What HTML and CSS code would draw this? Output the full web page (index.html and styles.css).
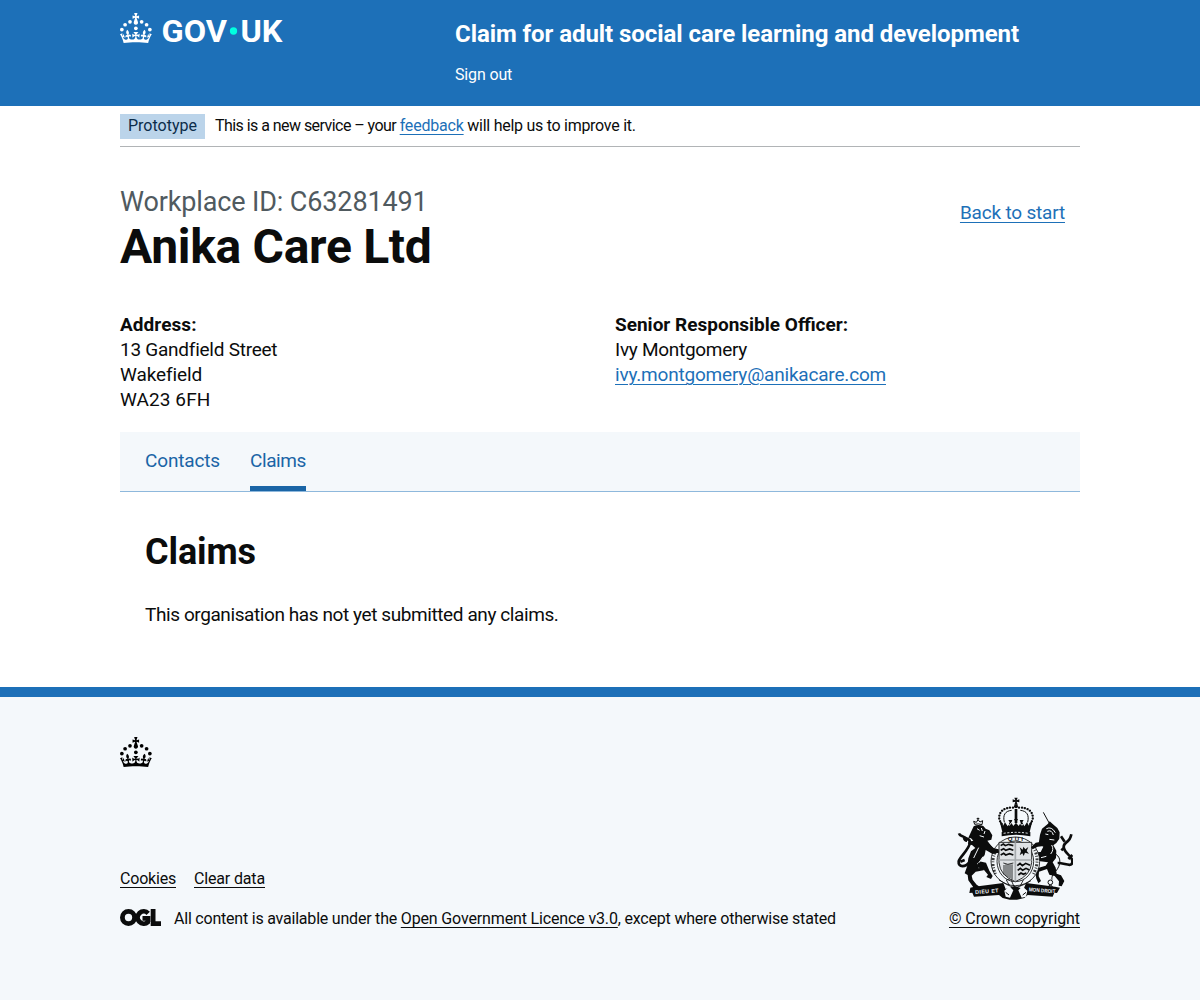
FILE: index.html
```html
<!DOCTYPE html>
<html lang="en">
<head>
<meta charset="utf-8">
<title>Anika Care Ltd – Claims</title>
<link rel="stylesheet" href="styles.css">
</head>
<body>
<svg class="symbols" width="0" height="0" aria-hidden="true">
  <symbol id="crown" viewBox="0 0 64 60">
    <circle cx="20" cy="17.6" r="3.7"/><circle cx="10.2" cy="23.5" r="3.7"/><circle cx="3.7" cy="33.2" r="3.7"/><circle cx="31.7" cy="30.6" r="3.7"/><circle cx="43.3" cy="17.6" r="3.7"/><circle cx="53.2" cy="23.5" r="3.7"/><circle cx="59.7" cy="33.2" r="3.7"/>
    <path d="M33.1,9.8c.2-.1.3-.3.5-.5l4.6,2.4v-6.8l-4.6,1.5c-.1-.2-.3-.3-.5-.5l1.9-5.9h-6.7l1.9,5.9c-.2.1-.3.3-.5.5l-4.6-1.5v6.8l4.6-2.4c.1.2.3.3.5.5l-2.6,8c-.9,2.8,1.2,5.7,4.1,5.7h0c3,0,5.1-2.9,4.1-5.7l-2.6-8ZM37,37.9s-3.4,3.8-4.1,6.1c2.2,0,4.2-.5,6.4-2.8l-.7,8.5c-2-2.8-4.4-4.1-5.7-3.8.1,3.1.5,6.7,5.8,7.2,3.7.3,6.7-1.5,7-3.8.4-2.6-2-4.3-3.7-1.6-1.4-4.5,2.4-6.1,4.9-3.2-1.9-4.5-1.8-7.7,2.4-10.9,3,4,2.6,7.3-1.2,11.1,2.4-1.3,6.2,0,4,4.6-1.2-2.8-3.7-2.2-4.2.2-.3,1.7.7,3.7,3,4.2,1.9.3,4.7-.9,7-5.9-1.3,0-2.4.7-3.9,1.7l2.4-8c.6,2.3,1.4,3.7,2.2,4.5.6-1.6.5-2.8,0-5.3l5,1.8c-2.6,3.6-5.2,8.7-7.3,17.5-7.4-1.1-15.7-1.7-24.5-1.7h0c-8.8,0-17.1.6-24.5,1.7-2.1-8.9-4.7-13.9-7.3-17.5l5-1.8c-.5,2.5-.6,3.7,0,5.3.8-.8,1.6-2.3,2.2-4.5l2.4,8c-1.5-1-2.6-1.7-3.9-1.7,2.3,5,5.2,6.2,7,5.9,2.3-.4,3.3-2.4,3-4.2-.5-2.4-3-3.1-4.2-.2-2.2-4.6,1.6-6,4-4.6-3.7-3.7-4.2-7.1-1.2-11.1,4.2,3.2,4.3,6.4,2.4,10.9,2.5-2.8,6.3-1.3,4.9,3.2-1.8-2.7-4.1-1-3.7,1.6.3,2.3,3.3,4.1,7,3.8,5.4-.5,5.7-4.2,5.8-7.2-1.3-.2-3.7,1-5.7,3.8l-.7-8.5c2.2,2.3,4.2,2.7,6.4,2.8-.7-2.3-4.1-6.1-4.1-6.1h10.6Z"/>
  </symbol>
</svg>

<header class="header">
  <div class="container header-grid">
    <a class="logo" href="#" aria-label="GOV.UK">
      <svg class="logo-svg" width="170" height="40" viewBox="0 0 340 80">
        <use href="#crown" width="64" height="60"/>
        <text class="logo-text" x="83" y="58" textLength="131" lengthAdjust="spacingAndGlyphs">GOV</text>
        <circle class="logo-dot" cx="227" cy="36" r="7.3"/>
        <text class="logo-text" x="241" y="58" textLength="84" lengthAdjust="spacingAndGlyphs">UK</text>
      </svg>
    </a>
    <div>
      <a class="service-name" href="#">Claim for adult social care learning and development</a>
      <nav><a class="sign-out" href="#">Sign out</a></nav>
    </div>
  </div>
</header>

<div class="container">
  <div class="phase-banner">
    <strong class="tag">Prototype</strong>
    <span class="phase-text"><span class="phase-intro">This is a new service – your </span><a class="link feedback" href="#">feedback</a> will help us to improve it.</span>
  </div>

  <main class="main">
    <div class="title-row">
      <div>
        <span class="caption">Workplace ID: C63281491</span>
        <h1 class="heading-xl">Anika Care Ltd</h1>
      </div>
      <a class="link back" href="#">Back to start</a>
    </div>

    <div class="details">
      <div>
        <div class="label">Address:</div>
        <div class="street">13 Gandfield Street</div>
        <div class="town">Wakefield</div>
        <div class="postcode">WA23 6FH</div>
      </div>
      <div>
        <div class="label officer-label">Senior Responsible Officer:</div>
        <div class="officer">Ivy Montgomery</div>
        <div><a class="link email" href="#">ivy.montgomery@anikacare.com</a></div>
      </div>
    </div>

    <nav class="subnav">
      <a class="subnav-item contacts" href="#">Contacts</a>
      <a class="subnav-item claims active" href="#">Claims</a>
    </nav>

    <section class="panel">
      <h2 class="heading-l">Claims</h2>
      <p class="body-text">This organisation has not yet submitted any claims.</p>
    </section>
  </main>
</div>

<footer class="footer">
  <div class="container">
    <svg class="footer-crown" width="32" height="30"><use href="#crown" width="32" height="30"/></svg>
    <div class="footer-meta">
      <div>
        <div class="footer-links">
          <a class="footer-link cookies" href="#">Cookies</a>
          <a class="footer-link clear" href="#">Clear data</a>
        </div>
        <div class="licence">
          <svg class="ogl" width="41" height="17" viewBox="0 0 41 17" aria-label="OGL">
            <circle cx="8.5" cy="8.5" r="6.1"/>
            <path d="M28.2 4.3A6.1 6.1 0 1 0 27.9 13V9.4H22.5M33.1 0V14.6H41"/>
          </svg>
          <span><span class="licence-intro">All content is available under the </span><a class="footer-link ogl-link" href="#">Open Government Licence v3.0</a><span class="licence-end">, except where otherwise stated</span></span>
        </div>
      </div>
      <a class="copyright" href="#">
        <svg class="crest" width="116" height="103" viewBox="36 18 348 309" aria-hidden="true">
          <g class="ink">
            <!-- crown -->
            <path d="M208 20h10l-3 8 8-3v9l-8-2 3 9h-10l3-9-8 2v-9l8 3z"/>
            <circle cx="213" cy="46" r="6"/>
            <rect x="209" y="54" width="8" height="42"/>
            <path class="beads" d="M204 50C176 48 160 64 163 84Q165 92 170 99M222 50C250 48 266 64 263 84Q261 92 256 99"/>
            <path class="thin" d="M200 58C180 60 173 72 178 94M226 58C246 60 253 72 248 94"/>
            <path d="M164 91q9 3 10 13l6-10 8 12 6-12-4-7h12l-3 8 6 10 8-10-6-11h12l-6 11 8 10 6-10-3-8h12l-4 7 6 12 8-12 6 10q1-10 10-13l-8 32h-82z"/>
            <path d="M170 123q43-9 86 0v13q-43-9-86 0z"/>
            <!-- lion -->
            <path class="thin" d="M89 100l-3-9 8 3 5-8 6 7 8-4-2 12q-11-4-22-1zM99 86v-6M95 83h8"/>
            <path d="M86 106q13-8 29-1l7 8 11 5 9 15-3 13-12 3 8 11 14 16 13 5-2 8-18-1-20-11-3 15-12 16-11 10 5 14 16-3-1 9-24 4-12 12 3 12 12 15 7 5-3 8-14-5-15-21-2-16-9-5 8-23 3-22 8-21 13-10-9-8-13-5 1-6 15-3-7-7-8-2z"/>
            <path d="M103 211l20 4 10 24 10 16-5 9-14-6 5-7-12-14-13-6-12-4z"/>
            <path class="tail" d="M76 211C61 230 39 230 41 211C42 200 72 177 75 155C75 140 65 147 57 138C48 132 45 136 42 127M46 212l13-5M57 141q2 8 9 8"/>
            <!-- unicorn -->
            <path class="thin" d="M295 64l18 33"/>
            <path d="M285 131l6-18 18-15 5-7 9 8 14 12 7 13-1 19-9 13-9 7 9 16-1 22-10 13 9 16 3 18 13 5 10 17-8 16-9-2 1-13-13-16-16-4-7-17-24 8-1 14 7 14-8 7-6-14-3-18 8-14 23-7 7-10-23-3-21-14-18 16-7 14-9-4 8-16 20-22 28-2 8-16-14-9z"/>
            <path class="tail" d="M338 216C358 215 383 232 382 211C382 194 358 188 356 168C356 150 374 159 379 130M359 152l-11-16M370 204l12-12M357 170l-8 8"/>
            <path class="thin" d="M333 190c18 12 12 34 2 47-10 12-16 19-14 29"/>
            <circle class="thin" cx="316" cy="274" r="7"/>
            <circle class="thin" cx="316" cy="289" r="6"/>
            <!-- scrolls and base -->
            <path d="M76 290l12-3 87-11 7 18 27-9 27 9 7-18 87 11 15 3-9 16-8-1-5 12-75-5-10 9-22 5h-22l-21-5-11-9-75 5-5-12-9 1z"/>
          </g>
          <g class="paper">
            <path d="M178 299l15-13 12 12-10 22-13-3zM247 299l-15-13-12 12 10 22 13-3z"/>
            <path class="thin" d="M182 304l10 8M243 304l-10 8"/>
            <ellipse class="garter" cx="211" cy="211" rx="73" ry="73"/>
            <path class="cut" d="M96 113l8 5m5-7 3 9m8 0-3 9M104 134l13 4M101 170l-15 31M114 197l-12 18M304 113q16-8 27 12M307 121q13-6 18 11M301 129l9 2M313 145l15 2M304 196l-16 4M320 162q8 14-3 27M183 94l10 9 7-9M222 94l9 9 8-9"/>
            <path class="cut dashed" d="M176 127q37-6 74 0"/>
          </g>
          <ellipse class="garter-edge" cx="211" cy="211" rx="55" ry="61"/>
          <path class="letters" d="M154 177Q135 208 151 249M269 177Q286 214 263 253"/>
          <path class="thin-line" d="M162 267q23 15 47 24l25-9 24-13M193 283l-9-16 13-4 10 24M225 286l10-19"/>
          <path class="shield" d="M162 154h98v61q-3 39-49 57-46-18-49-57z"/>
          <path class="divide" d="M211 154v117M162 207h98"/>
          <g class="charges">
            <path d="M167 164l8-5 6 5 10-4 14 4M167 178l9-5 6 5 12-4 11 4M167 192l9-5 6 5 12-4 11 4M217 224l8-7 7 7 10-7 13 6M218 238l8-6 7 6 10-6 10 5M220 252l8-6 7 4 9-4"/>
            <path d="M224 169l9 7 2-9 6 8 9-7-5 12 7 8-12-3-4 10-4-8-8 6 4-12z"/>
            <path class="harp" d="M177 222v29M183 220v35M189 220v39M195 220v41M201 220v46M175 216q12 8 30 0"/>
          </g>
          <path class="paw" d="M130 158l17 14 14 3 1 10-20 3-17-13zM298 151l-26 4-14 14 5 6 15-8 25-3z"/>
          <text class="motto" x="188" y="150" textLength="46">QUI</text>
          <text class="motto scroll" x="91" y="309" textLength="70" transform="rotate(-4 91 309)">DIEU ET</text>
          <text class="motto scroll" x="251" y="301" textLength="80" lengthAdjust="spacingAndGlyphs" transform="rotate(4 251 301)">MON DROIT</text>
        </svg>
        <span class="footer-link crown-link">© Crown copyright</span>
      </a>
    </div>
  </div>
</footer>
</body>
</html>
```
FILE: styles.css
```css
* { box-sizing: border-box; }

body {
  margin: 0;
  background: linear-gradient(#fff 0 690px, #f4f8fb 690px);
  color: #0b0c0c;
  font: 19px/25px Roboto, "Liberation Sans", sans-serif;
}

.symbols { display: block; }
.container { width: 960px; margin: 0 auto; }

/* Header */
.header { height: 106px; background: #1d70b8; color: #fff; }
.header a { color: #fff; text-decoration: none; }
.header-grid { display: grid; grid-template-columns: 335px 1fr; }
.logo { padding-top: 13px; line-height: 0; fill: #fff; }
.logo-svg { overflow: visible; }
.logo-text { font: 700 62px Roboto, sans-serif; }
.logo-dot { fill: #00ffe0; }
.service-name {
  display: block;
  margin-top: 19px;
  font-size: 24px;
  font-weight: 700;
  line-height: 30px;
  letter-spacing: -0.068px;
}
.sign-out { display: block; margin-top: 16px; font-size: 16px; line-height: 20px; letter-spacing: -0.15px; }

/* Phase banner */
.phase-banner {
  display: flex;
  align-items: center;
  gap: 10px;
  height: 41px;
  border-bottom: 1px solid #b1b4b6;
  font-size: 16px;
  line-height: 20px;
}
.tag {
  width: 85px;
  height: 25px;
  padding: 2px 8px 3px;
  background: #bbd4ea;
  color: #0c2d4a;
  font-weight: 400;
}
.phase-text { letter-spacing: -0.27px; }
.phase-intro { letter-spacing: -0.55px; }
.feedback { letter-spacing: -0.2px; }

.link { color: #1d70b8; text-decoration: underline; text-decoration-thickness: 1px; text-underline-offset: 0.1578em; }

/* Main */
.main { padding-top: 40px; }
.title-row { display: flex; justify-content: space-between; margin-bottom: 40px; }
.caption { display: block; color: #505a5f; font-size: 27px; line-height: 30px; letter-spacing: -0.13px; }
.heading-xl { margin: 5px 0 0; font-size: 48px; line-height: 50px; letter-spacing: -0.3px; }
.back { align-self: flex-start; margin: 13px 15px 0 0; letter-spacing: -0.19px; }
.details { display: grid; grid-template-columns: 495px 1fr; margin-bottom: 20px; }
.label { font-weight: 700; letter-spacing: 0.06px; }
.officer-label { letter-spacing: 0; }
.street { letter-spacing: -0.25px; }
.town { letter-spacing: -0.09px; }
.postcode { letter-spacing: 0.09px; }
.officer { letter-spacing: -0.289px; }
.email { letter-spacing: -0.194px; }

.subnav {
  display: flex;
  gap: 30px;
  height: 60px;
  padding: 0 25px;
  border-bottom: 1px solid #8eb8dc;
  background: #f4f8fb;
}
.subnav-item { padding-top: 16px; color: #1a65a6; text-decoration: none; }
.contacts { letter-spacing: -0.152px; }
.claims { letter-spacing: -0.402px; }
.active { border-bottom: 5px solid #1a65a6; }

.panel { padding: 40px 25px 60px; }
.heading-l { margin: 0 0 30px; font-size: 36px; line-height: 40px; letter-spacing: -0.092px; }
.body-text { margin: 0; letter-spacing: -0.41px; }

/* Footer */
.footer { min-height: 313px; padding-top: 40px; border-top: 10px solid #1d70b8; background: #f4f8fb; font-size: 16px; line-height: 20px; }
.footer-crown { display: block; margin-bottom: 30px; }
.footer-meta { display: flex; justify-content: space-between; align-items: flex-end; }
.footer-link { color: #0b0c0c; text-decoration: underline; text-decoration-thickness: 1px; text-underline-offset: 3px; }
.footer-links { display: flex; gap: 18px; margin-bottom: 20px; }
.cookies { letter-spacing: -0.201px; }
.clear { letter-spacing: -0.155px; }
.licence { display: flex; align-items: center; gap: 13px; }
.licence-intro { letter-spacing: -0.212px; }
.ogl-link { letter-spacing: -0.147px; }
.licence-end { letter-spacing: -0.202px; }
.ogl { margin-top: -4px; fill: none; stroke: #0b0c0c; stroke-width: 4.8; }
.copyright { display: flex; flex-direction: column; align-items: center; gap: 9px; text-decoration: none; }
.crest { margin-left: 1px; }
.crown-link { letter-spacing: -0.087px; }

/* Royal arms */
.ink { fill: #0b0c0c; }
.thin, .beads, .tail { fill: none; stroke: #0b0c0c; stroke-width: 3; }
.beads { stroke-width: 7; stroke-linecap: round; stroke-dasharray: 0.1 8.5; }
.tail { stroke-width: 8; stroke-linejoin: round; }
.paper { fill: #f4f8fb; }
.garter { stroke: #0b0c0c; stroke-width: 2.5; }
.garter-edge { fill: #f4f8fb; stroke: #0b0c0c; stroke-width: 2.5; }
.cut { fill: none; stroke: #f4f8fb; stroke-width: 3; }
.dashed { stroke-dasharray: 6 5; }
.letters { fill: none; stroke: #0b0c0c; stroke-width: 9; stroke-dasharray: 3 5 6 4; opacity: 0.8; }
.thin-line { fill: none; stroke: #0b0c0c; stroke-width: 2.5; }
.shield { fill: #dfe2e5; stroke: #0b0c0c; stroke-width: 2.5; }
.divide { fill: none; stroke: #a6aaad; stroke-width: 5; }
.charges { fill: #0b0c0c; stroke: #0b0c0c; stroke-width: 4; }
.charges path:first-child { fill: none; stroke-width: 5; }
.charges path:nth-child(2) { stroke-width: 0; }
.charges .harp { fill: none; stroke-width: 2.5; }
.paw { fill: #0b0c0c; }
.motto { font: 700 18px "Liberation Sans", sans-serif; fill: #0b0c0c; }
.scroll { font-size: 16px; fill: #f4f8fb; }
```
